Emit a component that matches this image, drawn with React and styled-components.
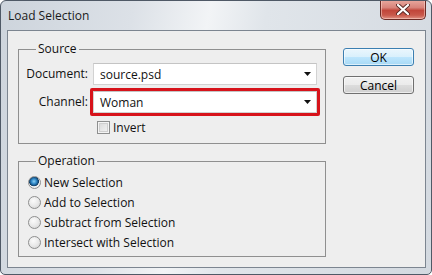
import React from 'react'
import styled, { createGlobalStyle } from 'styled-components'

const GlobalStyle = createGlobalStyle`
    body {
        margin: 0;
        background: #ffffff;
        font-family: "Open Sans", "Liberation Sans", sans-serif;
    }
`;

const radios = [
    { id: 'new', label: 'New Selection', checked: true },
    { id: 'add', label: 'Add to Selection' },
    { id: 'sub', label: 'Subtract from Selection' },
    { id: 'int', label: 'Intersect with Selection' },
]

function Arrow() {
    return (
        <svg width="7" height="4" viewBox="0 0 7 4">
            <polygon points="0,0 7,0 3.5,4" fill="#111" />
        </svg>
    )
}

function App() {
    return (
        <>
            <GlobalStyle />
            <Window>
                <TitleBar>
                    <Title>Load Selection</Title>
                    <CloseButton>
                        <svg width="14" height="11" viewBox="0 0 14 11">
                            <path d="M2 1 L12 10 M12 1 L2 10" stroke="#5a2a26" strokeWidth="4" strokeLinecap="round" />
                            <path d="M2 1 L12 10 M12 1 L2 10" stroke="#ffffff" strokeWidth="2.2" strokeLinecap="round" />
                        </svg>
                    </CloseButton>
                </TitleBar>
                <Client>
                    <LeftColumn>
                        <Group>
                            <Legend>Source</Legend>
                            <SourceGrid>
                                <Label>Document:</Label>
                                <Select>
                                    <span>source.psd</span>
                                    <Arrow />
                                </Select>
                                <Label>Channel:</Label>
                                <Highlight>
                                    <Select>
                                        <span>Woman</span>
                                        <Arrow />
                                    </Select>
                                </Highlight>
                                <span />
                                <CheckRow>
                                    <CheckBox />
                                    <span>Invert</span>
                                </CheckRow>
                            </SourceGrid>
                        </Group>
                        <Group>
                            <Legend>Operation</Legend>
                            <RadioList>
                                {radios.map((item) => (
                                    <RadioRow key={item.id}>
                                        <Radio $checked={item.checked} />
                                        <span>{item.label}</span>
                                    </RadioRow>
                                ))}
                            </RadioList>
                        </Group>
                    </LeftColumn>
                    <ButtonColumn>
                        <Button $primary>OK</Button>
                        <Button>Cancel</Button>
                    </ButtonColumn>
                </Client>
            </Window>
        </>
    )
}

const Window = styled.div`
    width: 432px;
    height: 275px;
    box-sizing: border-box;
    border: 1px solid #4f5966;
    border-radius: 6px 6px 5px 5px;
    background: linear-gradient(100deg, #cdd4dc 0%, #dce1e7 28%, #f2f4f6 44%, #e0e5ea 56%, #d3d9e0 100%);
    overflow: hidden;
`;

const TitleBar = styled.div`
    height: 29px;
    display: flex;
    justify-content: space-between;
    align-items: center;
    padding: 0 5px 0 7px;
`;

const Title = styled.div`
    font-size: 12px;
    color: #1b1b1b;
    font-family: "Open Sans", "Liberation Sans", sans-serif;
`;

const CloseButton = styled.div`
    align-self: flex-start;
    margin-top: -1px;
    width: 46px;
    height: 20px;
    box-sizing: border-box;
    border: 1px solid #6b2a24;
    border-top: none;
    border-radius: 0 0 5px 5px;
    background: linear-gradient(#e9a99f 0%, #d8837a 40%, #c1463a 55%, #c9594b 80%, #e09184 100%);
    display: flex;
    align-items: center;
    justify-content: center;
    box-shadow: inset 0 0 0 1px rgba(255, 220, 210, 0.5);
`;

const Client = styled.div`
    margin: 0 5px 0 6px;
    height: 238px;
    box-sizing: border-box;
    border: 1px solid #7c8590;
    background: #eeeeee;
    display: flex;
    align-items: flex-start;
    padding: 11px 0 0 10px;
    gap: 17px;
    font-size: 12px;
    color: #111;
`;

const LeftColumn = styled.div`
    width: 308px;
    display: flex;
    flex-direction: column;
    gap: 10px;
`;

const Group = styled.fieldset`
    margin: 0;
    padding: 0;
    min-width: 0;
    border: 1px solid #8f8f8f;
`;

const Legend = styled.legend`
    margin-left: 17px;
    padding: 0 2px;
    font-size: 12px;
    line-height: 14px;
`;

const SourceGrid = styled.div`
    display: grid;
    grid-template-columns: 69px 224px;
    column-gap: 5px;
    row-gap: 3px;
    align-items: center;
    padding: 7px 0 9px 0;
`;

const Label = styled.div`
    justify-self: end;
    line-height: 14px;
`;

const Select = styled.div`
    height: 22px;
    box-sizing: border-box;
    border: 1px solid #d2d2d2;
    border-top-color: #c4c4c4;
    background: #ffffff;
    display: flex;
    align-items: center;
    justify-content: space-between;
    padding: 0 5px 0 6px;
    font-size: 12px;
`;

const Highlight = styled.div`
    margin: 0 -3px;
    border: 3px solid #d7131b;
    border-radius: 2px;
`;

const CheckRow = styled.div`
    display: flex;
    align-items: center;
    gap: 3px;
    margin: 2px 0 0 4px;
    height: 13px;
    line-height: 13px;
`;

const CheckBox = styled.span`
    width: 13px;
    height: 13px;
    box-sizing: border-box;
    border: 1px solid #8e8f8f;
    background: linear-gradient(135deg, #d6d6d6, #f6f6f6);
    box-shadow: inset 0 0 0 1px #f4f4f4, inset 0 0 0 2px #cfcfcf;
`;

const RadioList = styled.div`
    display: flex;
    flex-direction: column;
    padding: 4px 0 4px 9px;
`;

const RadioRow = styled.div`
    height: 20px;
    display: flex;
    align-items: center;
    gap: 3px;
`;

const Radio = styled.span`
    width: 13px;
    height: 13px;
    box-sizing: border-box;
    border-radius: 50%;
    border: 1px solid #8e8f8f;
    background: ${props => props.$checked
        ? 'radial-gradient(circle at 45% 40%, #8cd1f5 0%, #2c84c4 30%, #123f66 52%, #f4f4f4 58%, #dedede 100%)'
        : 'radial-gradient(circle at 40% 35%, #fbfbfb 0%, #e9e9e9 50%, #cfcfcf 100%)'};
`;

const ButtonColumn = styled.div`
    width: 71px;
    display: flex;
    flex-direction: column;
    gap: 10px;
    padding-top: 6px;
`;

const Button = styled.div`
    height: 18px;
    box-sizing: border-box;
    border: 1px solid ${props => props.$primary ? '#3c7fb1' : '#707070'};
    border-radius: 3px;
    background: ${props => props.$primary
        ? 'linear-gradient(#eaf6fd 0%, #d9f0fc 50%, #bee6fd 50%, #a7d9f5 100%)'
        : 'linear-gradient(#f2f2f2 0%, #ebebeb 50%, #dddddd 50%, #cfcfcf 100%)'};
    box-shadow: inset 0 0 0 1px rgba(255, 255, 255, 0.6);
    display: flex;
    align-items: center;
    justify-content: center;
    font-size: 12px;
    color: #000;
`;

export default App
